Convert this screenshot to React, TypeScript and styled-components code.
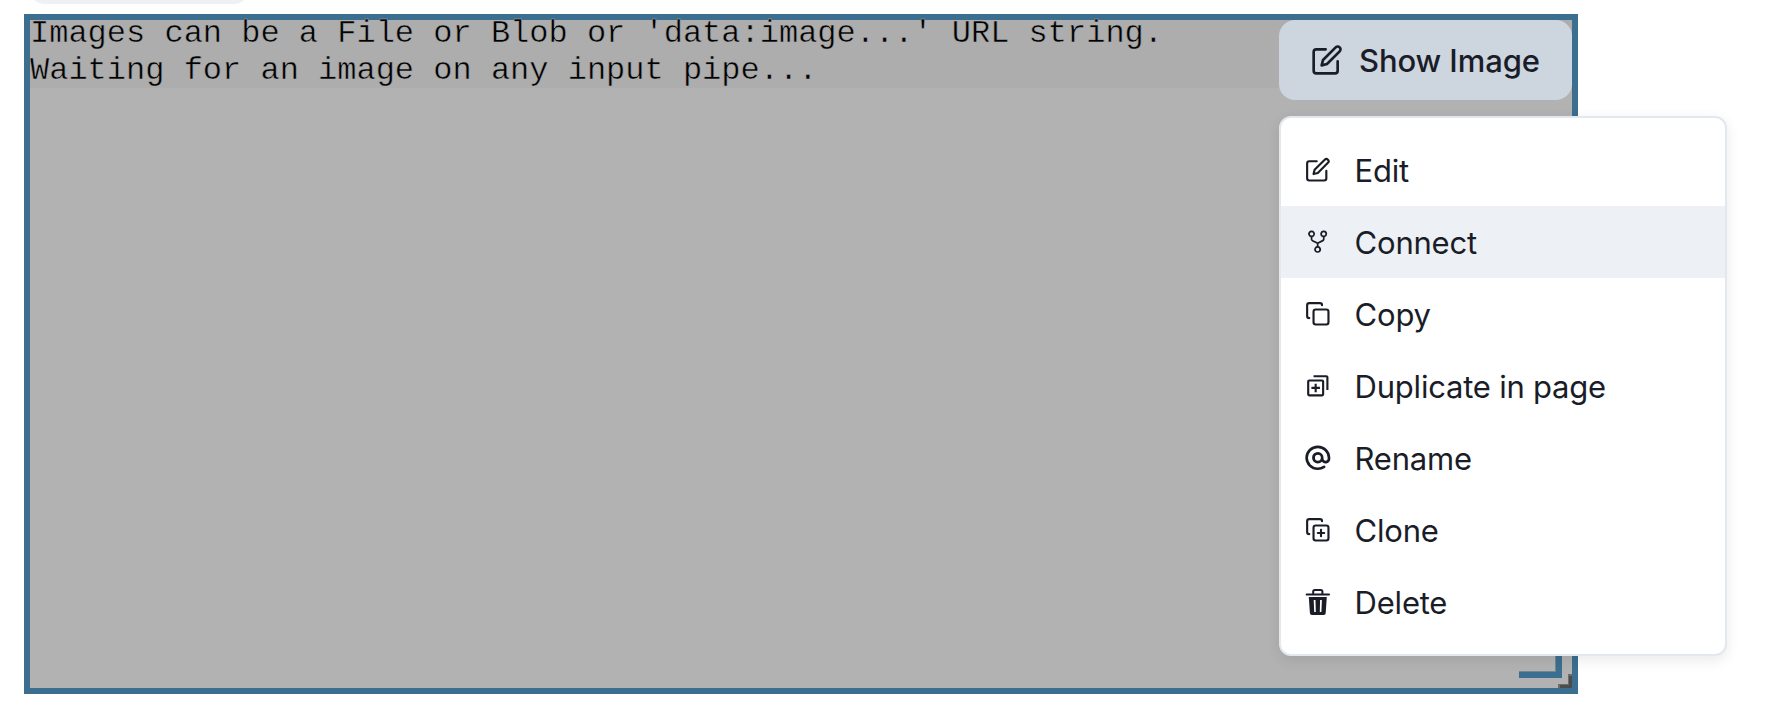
import React from "react";
import styled, { createGlobalStyle } from "styled-components";
import { LuCopy, LuCopyPlus } from "react-icons/lu";
import { BiDuplicate } from "react-icons/bi";
import { VscRepoForked } from "react-icons/vsc";

const GlobalStyle = createGlobalStyle`
  * { box-sizing: border-box; }
  body {
    margin: 0;
    background: #fff;
    color: #1a1d28;
    font-family: Inter, "Liberation Sans", sans-serif;
    overflow: hidden;
  }
`;

const Page = styled.main`
  display: flex;
  flex-direction: column;
  align-items: flex-start;
  height: 722px;
  padding-left: 24px;
`;

const TabEdge = styled.div`
  width: 221px;
  height: 4px;
  margin: 0 0 10px 5px;
  overflow: hidden;
  display: flex;
  align-items: flex-end;
`;

const Tab = styled.div`
  flex: 1;
  height: 60px;
  flex-shrink: 0;
  border-radius: 16px;
  background: #edf1f6;
`;

const Frame = styled.section`
  position: relative;
  width: 1554px;
  height: 680px;
  border: 6px solid #3c6e8f;
  background: #b2b2b2;
`;

const Message = styled.pre`
  margin: 0;
  height: 68px;
  background: #adadad;
  color: #000;
  font: 32px/37.3px "Liberation Mono", monospace;
  -webkit-text-stroke: 0.5px #adadad;
`;

const MessageText = styled.span`
  position: relative;
  top: -5px;
`;

const Overlay = styled.div`
  position: absolute;
  top: 0;
  left: 1249px;
  width: 448px;
  display: flex;
  flex-direction: column;
  align-items: flex-start;
  gap: 16px;
  z-index: 1;
`;

const MenuButton = styled.button`
  display: flex;
  align-items: center;
  gap: 16px;
  width: 293px;
  height: 80px;
  padding: 0 32px;
  border: 0;
  border-radius: 16px;
  background: #cdd5df;
  color: #1a1d28;
  font: 500 31px/40px Inter, sans-serif;
  letter-spacing: -0.1px;
  white-space: nowrap;
`;

const ButtonLabel = styled.span`
  padding-top: 2px;
`;

const MenuList = styled.ul`
  list-style: none;
  margin: 0;
  padding: 16px 0;
  width: 448px;
  border: 2px solid #e3e8ef;
  border-radius: 12px;
  background: #fff;
  box-shadow: 0 4px 14px rgba(0, 0, 0, 0.09);
`;

const MenuItem = styled.li<{ $active?: boolean }>`
  display: flex;
  align-items: center;
  gap: 24px;
  height: 72px;
  padding: 0 24px;
  background: ${(p) => (p.$active ? "#edf1f6" : "transparent")};
`;

const MenuLabel = styled.span`
  padding-top: 2px;
  font-size: 31px;
  line-height: 48px;
  letter-spacing: -0.22px;
`;

const IconSlot = styled.span`
  display: flex;
  align-items: center;
  justify-content: center;
  width: 25.6px;
  height: 25.6px;
  font-size: 25.6px;

  svg {
    flex-shrink: 0;
  }
`;

const ForkIcon = styled(VscRepoForked)`
  width: 27.6px;
  height: 27.6px;
  margin: 0 2px 2px 0;
`;

const ResizeMark = styled.span`
  position: absolute;
  right: 10px;
  bottom: 10px;
  width: 43px;
  height: 44px;
  border: solid #3c6e8f;
  border-width: 0 6px 6px 0;
  box-shadow: inset -1px -1px 0 #71868f;
`;

const ResizeGrip = styled.svg`
  position: absolute;
  right: 0;
  bottom: 0;
`;

function EditIcon({ size }: { size: number | string }) {
  return (
    <svg
      width={size}
      height={size}
      viewBox="0 0 24 24"
      fill="none"
      stroke="currentColor"
      strokeWidth="2"
      strokeLinecap="round"
      strokeLinejoin="round"
    >
      <path d="M11 4H4a2 2 0 0 0-2 2v14a2 2 0 0 0 2 2h14a2 2 0 0 0 2-2v-7" />
      <path d="M18.5 2.5a2.121 2.121 0 0 1 3 3L12 15l-4 1 1-4 9.5-9.5z" />
    </svg>
  );
}

function AtSignIcon() {
  return (
    <svg width="1em" height="1em" viewBox="0 0 24 24" fill="currentColor">
      <path d="M12,.5A11.634,11.634,0,0,0,.262,12,11.634,11.634,0,0,0,12,23.5a11.836,11.836,0,0,0,6.624-2,1.25,1.25,0,1,0-1.393-2.076A9.34,9.34,0,0,1,12,21a9.132,9.132,0,0,1-9.238-9A9.132,9.132,0,0,1,12,3a9.132,9.132,0,0,1,9.238,9v.891a1.943,1.943,0,0,1-3.884,0V12A5.355,5.355,0,1,0,12,17.261a5.376,5.376,0,0,0,3.861-1.634,4.438,4.438,0,0,0,7.877-2.736V12A11.634,11.634,0,0,0,12,.5Zm0,14.261A2.763,2.763,0,1,1,14.854,12,2.812,2.812,0,0,1,12,14.761Z" />
    </svg>
  );
}

function TrashIcon() {
  return (
    <svg width="1em" height="1em" viewBox="0 0 25.6 25.6" overflow="visible">
      <path d="M1.6 5.4H24" stroke="currentColor" strokeWidth="2" strokeLinecap="round" />
      <path
        d="M8.2 5V2.6a1.6 1.6 0 0 1 1.6-1.6h6a1.6 1.6 0 0 1 1.6 1.6V5"
        fill="none"
        stroke="currentColor"
        strokeWidth="2"
      />
      <path
        fillRule="evenodd"
        fill="currentColor"
        d="M3.8 8h18l-1.1 16a2 2 0 0 1-2 1.9H6.9a2 2 0 0 1-2-1.9zM8.7 11l.5 12h1.6l-.3-12zM15.1 11l-.3 12h1.6l.5-12z"
      />
    </svg>
  );
}

const items: { label: string; icon: React.ReactNode; active?: boolean }[] = [
  { label: "Edit", icon: <EditIcon size="1em" /> },
  { label: "Connect", icon: <ForkIcon />, active: true },
  { label: "Copy", icon: <LuCopy /> },
  { label: "Duplicate in page", icon: <BiDuplicate /> },
  { label: "Rename", icon: <AtSignIcon /> },
  { label: "Clone", icon: <LuCopyPlus /> },
  { label: "Delete", icon: <TrashIcon /> },
];

export default function App() {
  return (
    <>
      <GlobalStyle />
      <Page>
        <TabEdge>
          <Tab />
        </TabEdge>
        <Frame>
          <Message>
            <MessageText>
              {"Images can be a File or Blob or 'data:image...' URL string.\nWaiting for an image on any input pipe..."}
            </MessageText>
          </Message>
          <ResizeMark />
          <ResizeGrip width="14" height="14">
            <path d="M10 0h4v14H0v-4h10z" fill="#6c6c6c" />
            <path d="M11 2h3v12H2v-3h9z" fill="#4c4c4c" />
          </ResizeGrip>
          <Overlay>
            <MenuButton>
              <EditIcon size={32} />
              <ButtonLabel>Show Image</ButtonLabel>
            </MenuButton>
            <MenuList>
              {items.map((item) => (
                <MenuItem key={item.label} $active={item.active}>
                  <IconSlot>{item.icon}</IconSlot>
                  <MenuLabel>{item.label}</MenuLabel>
                </MenuItem>
              ))}
            </MenuList>
          </Overlay>
        </Frame>
      </Page>
    </>
  );
}
